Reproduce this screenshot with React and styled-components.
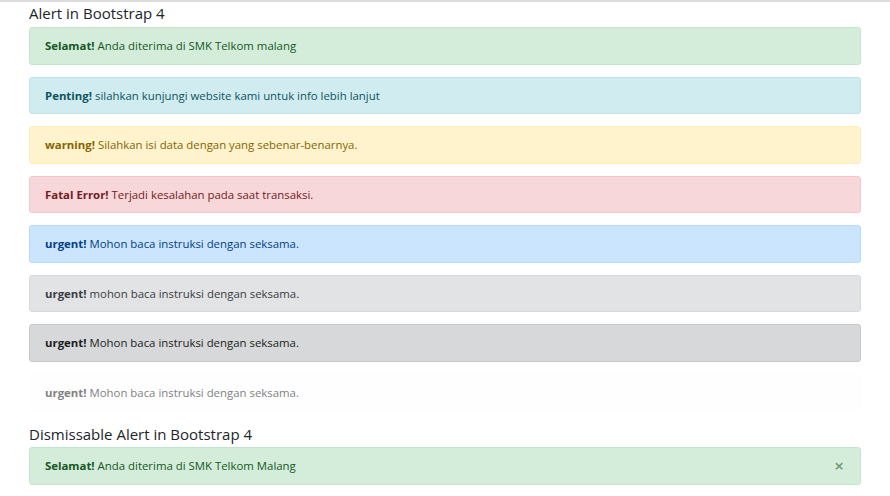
import React from 'react';
import styled, { createGlobalStyle } from 'styled-components';

const GlobalStyle = createGlobalStyle`
  body {
    margin: 0;
    background: #fff;
    font-family: "Open Sans", "Noto Sans", sans-serif;
    color: #212529;
  }
`;

const variants = {
  success: { bg: '#d4edda', border: '#c3e6cb', color: '#155724' },
  info: { bg: '#d1ecf1', border: '#bee5eb', color: '#0c5460' },
  warning: { bg: '#fff3cd', border: '#ffeeba', color: '#856404' },
  danger: { bg: '#f8d7da', border: '#f5c6cb', color: '#721c24' },
  primary: { bg: '#cce5ff', border: '#b8daff', color: '#004085' },
  secondary: { bg: '#e2e3e5', border: '#d6d8db', color: '#383d41' },
  dark: { bg: '#d6d8d9', border: '#c6c8ca', color: '#1b1e21' },
  light: { bg: '#fefefe', border: '#fdfdfe', color: '#818182' },
};

const Page = styled.div`
  border-top: 2px solid #dcdcdc;
`;

const Container = styled.div`
  width: 832px;
  padding: 0 0 0 29px;
`;

const Title = styled.h2`
  margin: 0;
  padding: 1px 0 0;
  height: ${p => (p.$tight ? '23px' : '24px')};
  line-height: 21px;
  font-size: 15px;
  font-weight: 400;
  color: #212529;
`;

const Alert = styled.div`
  display: flex;
  align-items: center;
  justify-content: space-between;
  box-sizing: border-box;
  height: 37.5px;
  margin-bottom: 12px;
  padding: 0 15px;
  border: 1px solid ${p => variants[p.$variant].border};
  border-radius: 3px;
  background: ${p => variants[p.$variant].bg};
  color: ${p => variants[p.$variant].color};
  font-size: 11.4px;
  line-height: 19.5px;

  strong {
    font-weight: 700;
  }
`;

const Close = styled.button`
  border: 0;
  background: transparent;
  padding: 0 1px 0 0;
  font-family: "Open Sans", sans-serif;
  font-size: 17px;
  font-weight: 600;
  line-height: 1;
  color: inherit;
  opacity: 0.55;
  cursor: pointer;
`;

const alerts = [
  { variant: 'success', label: 'Selamat!', text: 'Anda diterima di SMK Telkom malang' },
  { variant: 'info', label: 'Penting!', text: 'silahkan kunjungi website kami untuk info lebih lanjut' },
  { variant: 'warning', label: 'warning!', text: 'Silahkan isi data dengan yang sebenar-benarnya.' },
  { variant: 'danger', label: 'Fatal Error!', text: 'Terjadi kesalahan pada saat transaksi.' },
  { variant: 'primary', label: 'urgent!', text: 'Mohon baca instruksi dengan seksama.' },
  { variant: 'secondary', label: 'urgent!', text: 'mohon baca instruksi dengan seksama.' },
  { variant: 'dark', label: 'urgent!', text: 'Mohon baca instruksi dengan seksama.' },
  { variant: 'light', label: 'urgent!', text: 'Mohon baca instruksi dengan seksama.' },
];

export default function App() {
  return (
    <Page>
      <GlobalStyle />
      <Container>
        <Title>Alert in Bootstrap 4</Title>
        {alerts.map((a, i) => (
          <Alert key={i} $variant={a.variant}>
            <span><strong>{a.label}</strong> {a.text}</span>
          </Alert>
        ))}
        <Title $tight>Dismissable Alert in Bootstrap 4</Title>
        <Alert $variant="success">
          <span><strong>Selamat!</strong> Anda diterima di SMK Telkom Malang</span>
          <Close aria-label="Close">×</Close>
        </Alert>
      </Container>
    </Page>
  );
}
